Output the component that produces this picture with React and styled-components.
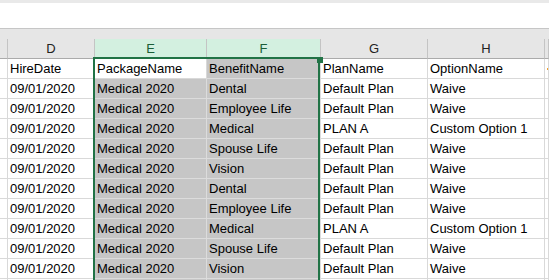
import React from "react";
import styled, { createGlobalStyle } from "styled-components";

const GlobalStyle = createGlobalStyle`
  html, body { margin: 0; padding: 0; background: #ffffff; overflow: hidden; }
  body { font-family: "Liberation Sans", Arial, sans-serif; }
`;

const Page = styled.div`
  width: 549px;
  height: 280px;
  overflow: hidden;
  display: flex;
  flex-direction: column;
`;

const TopStrip = styled.div`
  height: 3px;
  background: #e9e9e9;
  flex: none;
`;

const FormulaArea = styled.div`
  height: 25px;
  background: #ffffff;
  border-bottom: 1px solid #c6c6c6;
  flex: none;
`;

const Band = styled.div`
  height: 10px;
  background: #e6e6e6;
  flex: none;
`;

const Sheet = styled.div`
  position: relative;
  flex: none;
`;

const Grid = styled.div`
  display: grid;
  grid-template-columns: 8px 87px 112px 114px 107px 117px 1fr;
  grid-auto-rows: 20px;
`;

const HeadCell = styled.div`
  box-sizing: border-box;
  background: ${(p) => (p.$sel ? "#d3f0e0" : "#e6e6e6")};
  color: ${(p) => (p.$sel ? "#1b5e38" : "#222222")};
  border-right: 1px solid #c4c4c4;
  border-bottom: 1px solid #ababab;
  font-size: 13px;
  line-height: 19px;
  text-align: center;
  overflow: hidden;
`;

const Cell = styled.div`
  box-sizing: border-box;
  background: ${(p) => (p.$sel ? "#c6c6c6" : "#ffffff")};
  border-right: 1px solid ${(p) => (p.$sel ? "#dcdcdc" : "#d9d9d9")};
  border-bottom: 1px solid ${(p) => (p.$sel ? "#dcdcdc" : "#d9d9d9")};
  color: #000000;
  font-size: 13px;
  line-height: 20px;
  padding-left: 2px;
  white-space: nowrap;
  overflow: hidden;
  position: relative;
`;

const Selection = styled.div`
  position: absolute;
  left: 93px;
  top: 18px;
  width: 227px;
  height: 260px;
  box-sizing: border-box;
  border: 2px solid #217346;
  pointer-events: none;
`;

const Handle = styled.div`
  position: absolute;
  left: 317px;
  top: 18px;
  width: 6px;
  height: 6px;
  background: #217346;
`;

const Marker = styled.span`
  position: absolute;
  left: 2px;
  top: 9px;
  width: 2px;
  height: 2px;
  background: #f0a030;
`;

const header = ["", "D", "E", "F", "G", "H", ""];

const first = ["", "HireDate", "PackageName", "BenefitName", "PlanName", "OptionName", ""];

const data = [
  ["Dental", "Default Plan", "Waive"],
  ["Employee Life", "Default Plan", "Waive"],
  ["Medical", "PLAN A", "Custom Option 1"],
  ["Spouse Life", "Default Plan", "Waive"],
  ["Vision", "Default Plan", "Waive"],
  ["Dental", "Default Plan", "Waive"],
  ["Employee Life", "Default Plan", "Waive"],
  ["Medical", "PLAN A", "Custom Option 1"],
  ["Spouse Life", "Default Plan", "Waive"],
  ["Vision", "Default Plan", "Waive"],
];

export default function App() {
  return (
    <>
      <GlobalStyle />
      <Page>
        <TopStrip />
        <FormulaArea />
        <Band />
        <Sheet>
          <Grid>
            {header.map((h, i) => (
              <HeadCell key={"h" + i} $sel={i === 2 || i === 3}>
                {h}
              </HeadCell>
            ))}
            {first.map((t, i) => (
              <Cell key={"f" + i} $sel={i === 3}>
                {t}
                {i === 6 && <Marker />}
              </Cell>
            ))}
            {data.map((r, ri) => (
              <React.Fragment key={"r" + ri}>
                <Cell />
                <Cell>09/01/2020</Cell>
                <Cell $sel>Medical 2020</Cell>
                <Cell $sel>{r[0]}</Cell>
                <Cell>{r[1]}</Cell>
                <Cell>{r[2]}</Cell>
                <Cell />
              </React.Fragment>
            ))}
            <Cell />
            <Cell />
            <Cell $sel />
            <Cell $sel />
            <Cell />
            <Cell />
            <Cell />
          </Grid>
          <Selection />
          <Handle />
        </Sheet>
      </Page>
    </>
  );
}
